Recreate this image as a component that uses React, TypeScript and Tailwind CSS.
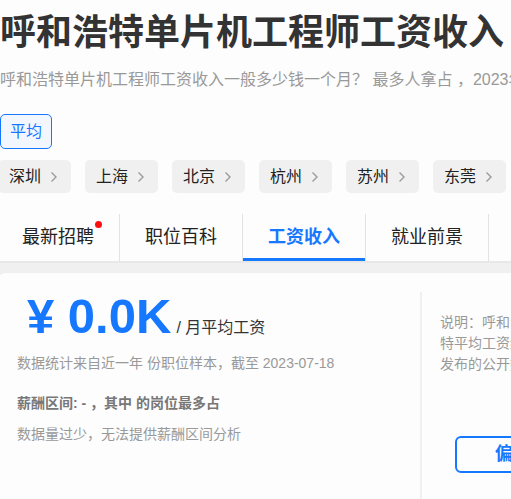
const cities = ["深圳", "上海", "北京", "杭州", "苏州", "东莞", "广州"];
const tabs = ["最新招聘", "职位百科", "工资收入", "就业前景", "职位指南"];

function Chevron() {
  return (
    <svg width="8" height="12" viewBox="0 0 8 12" className="shrink-0">
      <polyline points="1.5,1.5 6,6 1.5,10.5" fill="none" stroke="#9a9a9a" strokeWidth="1.4" />
    </svg>
  );
}

export default function App() {
  return (
    <div
      className="w-full h-[499px] overflow-hidden bg-[#fdfdfd] text-[#333]"
      style={{ fontFamily: '"Liberation Sans", "Noto Sans CJK SC", sans-serif' }}
    >
      <div className="w-[1200px]">
        {/* title */}
        <h1 className="mt-[15px] text-[36px] leading-[36px] font-bold text-[#333] whitespace-nowrap">
          呼和浩特单片机工程师工资收入
        </h1>
        <p className="mt-[17px] text-[16px] leading-[24px] text-[#999] whitespace-nowrap">
          呼和浩特单片机工程师工资收入一般多少钱一个月？ 最多人拿占 ，2023年呼和浩特单片机工程师平均工资
        </p>

        {/* filter */}
        <div className="mt-[22px] flex">
          <div className="w-[52px] h-[35px] flex items-center justify-center rounded-[5px] border border-[#1677ff] bg-[#f2f7ff] text-[16px] text-[#1677ff]">
            平均
          </div>
        </div>

        {/* cities */}
        <div className="mt-[11px] -ml-[2px] flex gap-[14px]">
          {cities.map((c) => (
            <div
              key={c}
              className="w-[73px] h-[33px] flex items-center justify-between pl-[11px] pr-[13px] rounded-[5px] bg-[#f0f0f0] text-[16px] text-[#222]"
            >
              <span>{c}</span>
              <Chevron />
            </div>
          ))}
        </div>

        {/* tabs */}
        <div className="mt-[21px] border-b-2 border-[#e8e8e8]">
          <div className="-ml-[3px] flex h-[47px]">
            {tabs.map((t, i) => (
              <div
                key={t}
                className={`relative w-[123px] shrink-0 flex items-center justify-center text-[18px] border-r border-[#e2e2e2] ${
                  i === 2 ? "text-[#1677ff] font-bold" : "text-[#222]"
                }`}
              >
                <span className="relative">
                  {t}
                  {i === 0 && (
                    <span className="absolute -right-[8px] top-[-3px] w-[7px] h-[7px] rounded-full bg-[#ff1010]" />
                  )}
                </span>
                {i === 2 && <span className="absolute left-0 right-0 bottom-0 h-[3px] bg-[#1677ff]" />}
              </div>
            ))}
          </div>
        </div>

        {/* body */}
        <div className="bg-[#f0f0f0] pt-[10px]">
          <div className="-ml-[2px] rounded-tl-[8px] bg-[#fdfdfd] flex h-[240px]">
            <div className="w-[422px] pl-[19px] pt-[17px]">
              <div className="flex items-baseline ml-[10px] whitespace-nowrap">
                <span className="text-[49px] leading-[52px] font-bold text-[#1677ff]">¥ 0.0K</span>
                <span className="ml-[5px] text-[16px] text-[#333]">/ 月平均工资</span>
              </div>
              <p className="mt-[11px] text-[14px] leading-[20px] text-[#999] whitespace-nowrap">
                数据统计来自近一年 份职位样本，截至 2023-07-18
              </p>
              <p className="mt-[20px] text-[14px] leading-[20px] font-bold text-[#777] whitespace-nowrap">
                薪酬区间: - ，其中 的岗位最多占
              </p>
              <p className="mt-[11px] text-[14px] leading-[20px] text-[#999] whitespace-nowrap">
                数据量过少，无法提供薪酬区间分析
              </p>
            </div>
            <div className="mt-[19px] w-[2px] bg-[#f0f0f0]" />
            <div className="pl-[18px] pt-[39px] w-[320px]">
              <p className="text-[14px] leading-[21px] text-[#999] whitespace-nowrap">
                说明：呼和浩特单片机工程师月薪数据来自呼和浩
                <br />
                特平均工资统计，根据近一年职友集及其他网站
                <br />
                发布的公开数据统计得出
              </p>
              <div className="mt-[61px] ml-[15px] w-[200px] h-[37px] flex items-center pl-[38px] rounded-[6px] border-2 border-[#1677ff] text-[18px] font-bold text-[#1677ff] whitespace-nowrap">
                偏低？我要报工资
              </div>
              <p className="mt-[10px] ml-[69px] text-[13px] text-[#999] whitespace-nowrap">（已有 0 人参与）</p>
            </div>
          </div>
        </div>
      </div>
    </div>
  );
}
